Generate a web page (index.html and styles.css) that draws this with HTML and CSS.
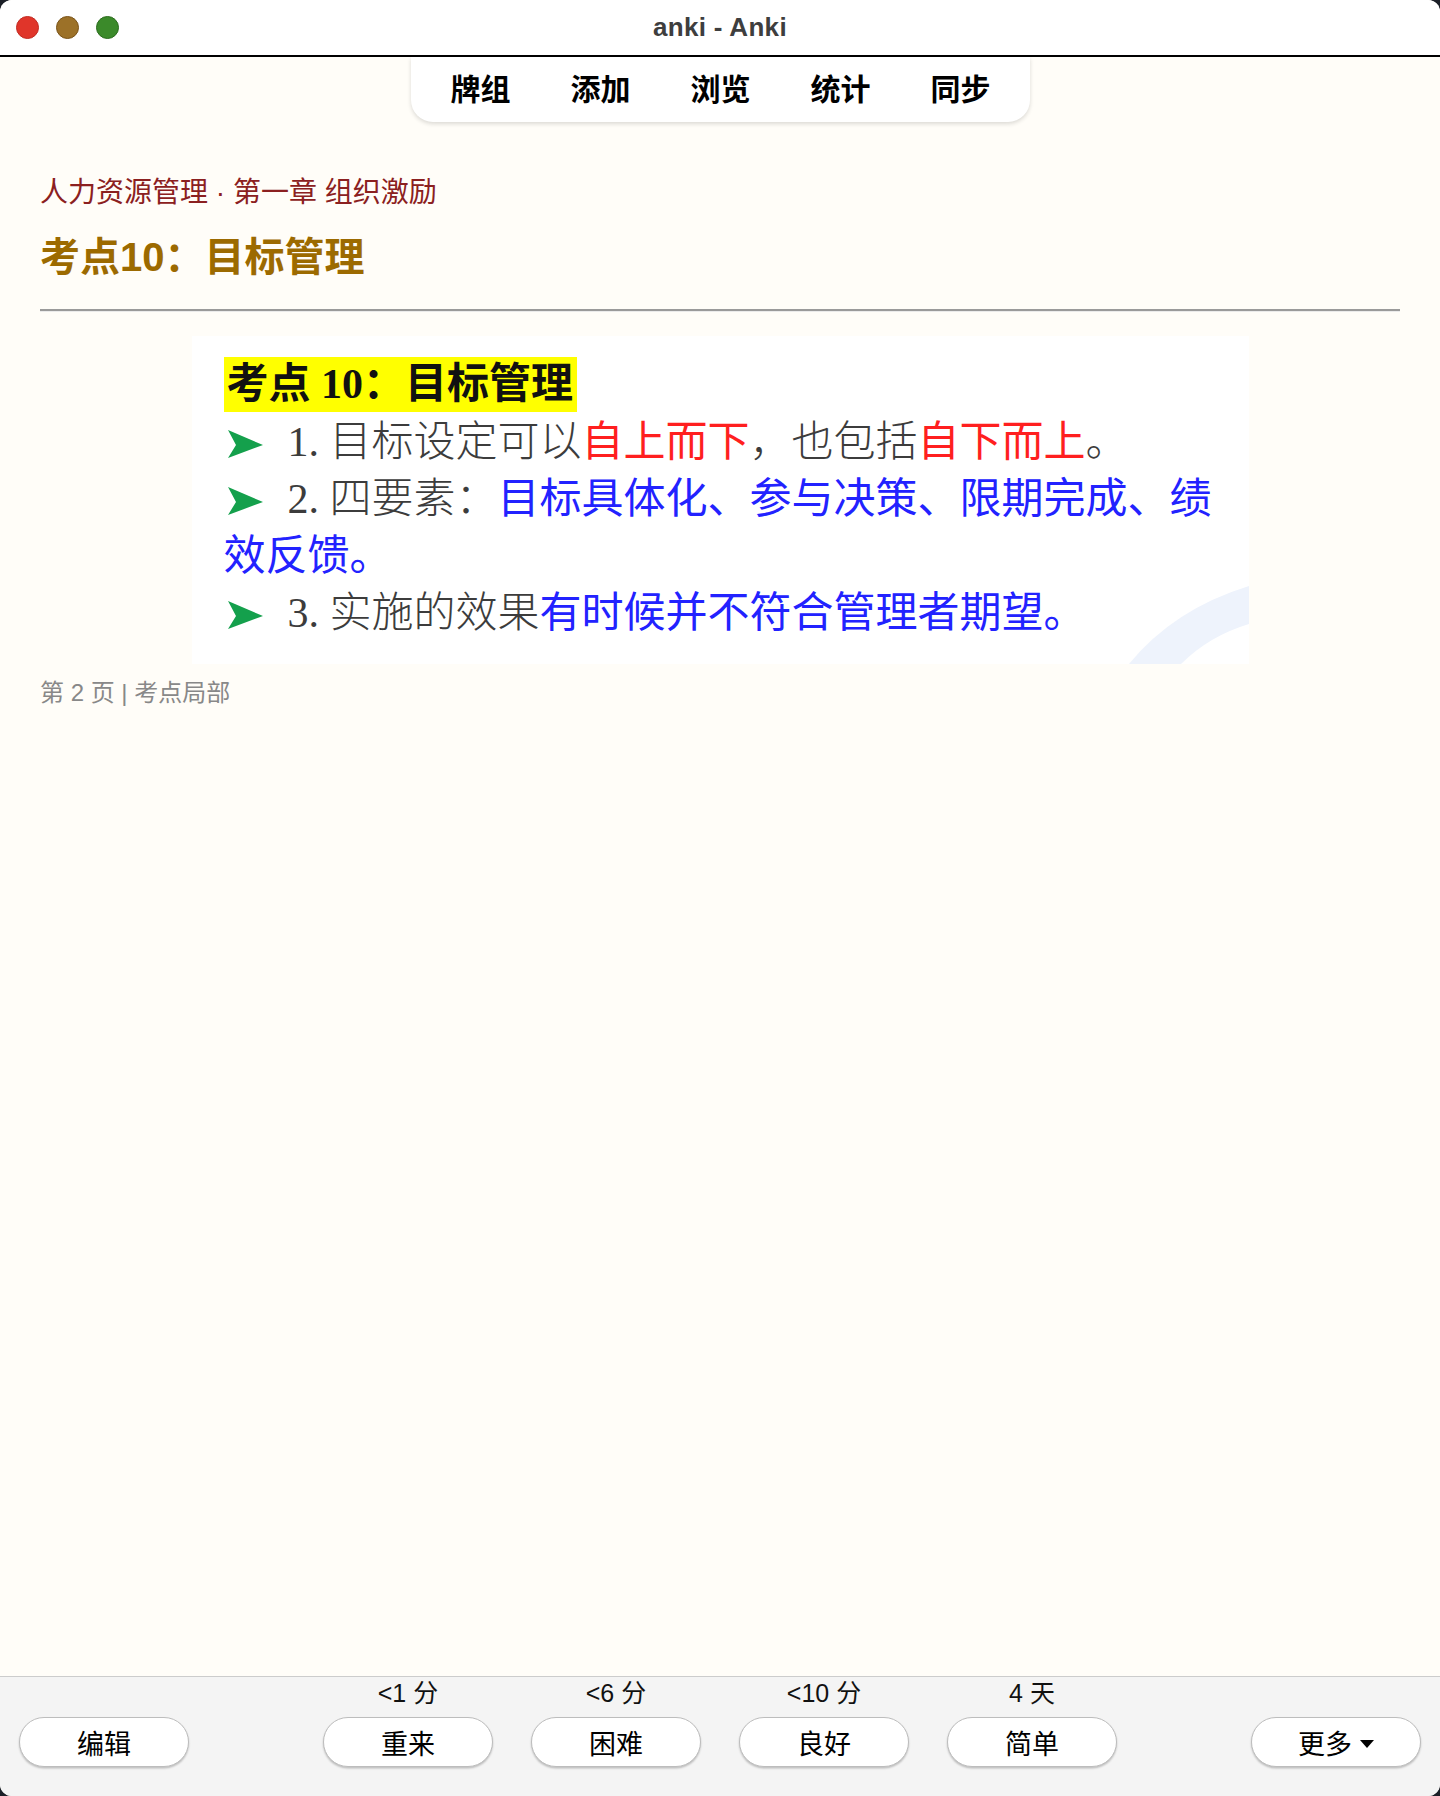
FILE: index.html
```html
<!DOCTYPE html>
<html lang="zh-CN">
<head>
<meta charset="utf-8">
<title>anki - Anki</title>
<link rel="stylesheet" href="styles.css">
</head>
<body>
<div class="window">
  <header class="titlebar">
    <div class="lights">
      <span class="light red"></span>
      <span class="light yellow"></span>
      <span class="light green"></span>
    </div>
    <div class="wintitle">anki - Anki</div>
    <div></div>
  </header>

  <main class="main">
    <nav class="toolbar">
      <span class="tab">牌组</span>
      <span class="tab">添加</span>
      <span class="tab">浏览</span>
      <span class="tab">统计</span>
      <span class="tab">同步</span>
    </nav>

    <section class="card">
      <div class="crumb">人力资源管理 · 第一章 组织激励</div>
      <h1 class="title">考点10：目标管理</h1>
      <hr class="sep">

      <div class="slide">
        <div class="slide-head"><span class="hl">考点 10：目标管理</span></div>
        <p class="pt"><svg class="arrow" viewBox="0 0 35 28"><polygon points="0,0 35,15 0,28 8,15"/></svg><span class="g">1. 目标设定可以</span><span class="r">自上而下</span><span class="g">，也包括</span><span class="r">自下而上</span><span class="g">。</span></p>
        <p class="pt"><svg class="arrow" viewBox="0 0 35 28"><polygon points="0,0 35,15 0,28 8,15"/></svg><span class="g">2. 四要素：</span><span class="b">目标具体化、参与决策、限期完成、绩效反馈。</span></p>
        <p class="pt"><svg class="arrow" viewBox="0 0 35 28"><polygon points="0,0 35,15 0,28 8,15"/></svg><span class="g">3. 实施的效果</span><span class="b">有时候并不符合管理者期望。</span></p>
        <svg class="swoosh" viewBox="0 0 120 90"><path d="M0,90 Q45,35 120,12 L120,50 Q80,62 52,90 Z"/></svg>
      </div>

      <div class="caption">第 2 页 | 考点局部</div>
    </section>
  </main>

  <footer class="answerbar">
    <button class="btn">编辑</button>
    <div class="answers">
      <div class="ans"><span class="due">&lt;1 分</span><button class="btn">重来</button></div>
      <div class="ans"><span class="due">&lt;6 分</span><button class="btn">困难</button></div>
      <div class="ans"><span class="due">&lt;10 分</span><button class="btn">良好</button></div>
      <div class="ans"><span class="due">4 天</span><button class="btn">简单</button></div>
    </div>
    <button class="btn more">更多<svg class="caret" viewBox="0 0 14 8"><polygon points="0,0 14,0 7,8"/></svg></button>
  </footer>
</div>
</body>
</html>
```

FILE: styles.css
```css
* { box-sizing: border-box; }

html, body {
  margin: 0;
  padding: 0;
  background: #1b1f27;
}

body {
  font-family: "Liberation Sans", "Noto Sans CJK SC", sans-serif;
  color: #000;
}

.window {
  width: 1440px;
  height: 1796px;
  display: flex;
  flex-direction: column;
  background: #fffdf8;
  border-radius: 12px;
  overflow: hidden;
}

/* ---------- title bar ---------- */
.titlebar {
  height: 57px;
  flex: none;
  background: #ffffff;
  border-bottom: 2px solid #000;
  display: grid;
  grid-template-columns: 1fr auto 1fr;
  align-items: center;
}

.lights {
  display: flex;
  gap: 17px;
  padding-left: 16px;
}

.light {
  width: 23px;
  height: 23px;
  border-radius: 50%;
  border: 1px solid;
}
.light.red { background: #e0352a; border-color: #c22b22; }
.light.yellow { background: #9c7128; border-color: #7a5318; }
.light.green { background: #3b8a2a; border-color: #2b6c1d; }

.wintitle {
  font-size: 26px;
  font-weight: bold;
  color: #3e3e3e;
  letter-spacing: 0.3px;
}

/* ---------- main ---------- */
.main {
  flex: 1;
  display: flex;
  flex-direction: column;
}

.toolbar {
  align-self: center;
  width: 619px;
  height: 65px;
  display: flex;
  align-items: center;
  gap: 60px;
  padding: 0 39px 0 40px;
  background: #ffffff;
  border-radius: 0 0 22px 22px;
  box-shadow: 0 2px 4px rgba(0, 0, 0, 0.14);
}

.tab {
  font-size: 30px;
  font-weight: bold;
  line-height: 1;
  color: #000;
}

.card {
  padding: 0 40px;
}

.crumb {
  margin-top: 54px;
  font-size: 28px;
  line-height: 34px;
  color: #8b2020;
}

.title {
  margin: 23px 0 0;
  font-size: 40px;
  line-height: 48px;
  font-weight: bold;
  color: #9c6a00;
}

.sep {
  margin: 28px 0 0;
  height: 0;
  border: 0;
  border-top: 2px solid #9a9a9a;
  border-bottom: 1px solid #ebebeb;
}

/* ---------- slide picture ---------- */
.slide {
  position: relative;
  width: 1057px;
  height: 328px;
  margin: 24px auto 0;
  padding: 21px 15px 24px 32px;
  background: #ffffff;
  overflow: hidden;
}

.slide-head {
  height: 55px;
}

.hl {
  display: inline-block;
  height: 55px;
  line-height: 55px;
  padding: 0 4px 0 3px;
  background: #ffff00;
  font-family: "Liberation Serif", "Noto Sans CJK SC", serif;
  font-weight: bold;
  font-size: 42px;
  color: #111;
}

.pt {
  margin: 0;
  padding-top: 2px;
  font-family: "Liberation Serif", "Noto Sans CJK SC", serif;
  font-size: 42px;
  line-height: 57px;
  position: relative;
  z-index: 1;
}

.pt + .pt {
  padding-top: 0;
}

.arrow {
  width: 35px;
  height: 28px;
  margin: 0 25px 0 4px;
  vertical-align: -2px;
  fill: #14a04c;
}

.g {
  color: #3c3c3c;
  font-weight: 300;
}

.r {
  color: #ff1f1f;
}

.b {
  color: #2222ff;
}

.swoosh {
  position: absolute;
  right: 0;
  bottom: 0;
  width: 120px;
  height: 90px;
  fill: #eef3fc;
}

.caption {
  margin-top: 14px;
  font-size: 24px;
  line-height: 30px;
  color: #888888;
}

/* ---------- answer bar ---------- */
.answerbar {
  flex: none;
  height: 120px;
  border-top: 1px solid #cccccc;
  background: #f4f4f4;
  display: flex;
  align-items: flex-end;
  justify-content: space-between;
  padding: 0 19px 29px;
}

.answers {
  display: flex;
  gap: 38px;
}

.ans {
  display: flex;
  flex-direction: column;
  align-items: center;
  gap: 11px;
}

.due {
  font-size: 25px;
  line-height: 26px;
  color: #111;
}

.btn {
  width: 170px;
  height: 50px;
  border: 1.5px solid #bdbdbd;
  border-radius: 25px;
  background: #ffffff;
  box-shadow: 0 1.5px 2px rgba(0, 0, 0, 0.22);
  font-family: "Liberation Sans", "Noto Sans CJK SC", sans-serif;
  font-size: 27px;
  color: #000;
  padding: 0;
  display: flex;
  align-items: center;
  justify-content: center;
}

.more {
  gap: 8px;
}

.caret {
  width: 14px;
  height: 8px;
  fill: #000;
  margin-top: 3px;
}
```
